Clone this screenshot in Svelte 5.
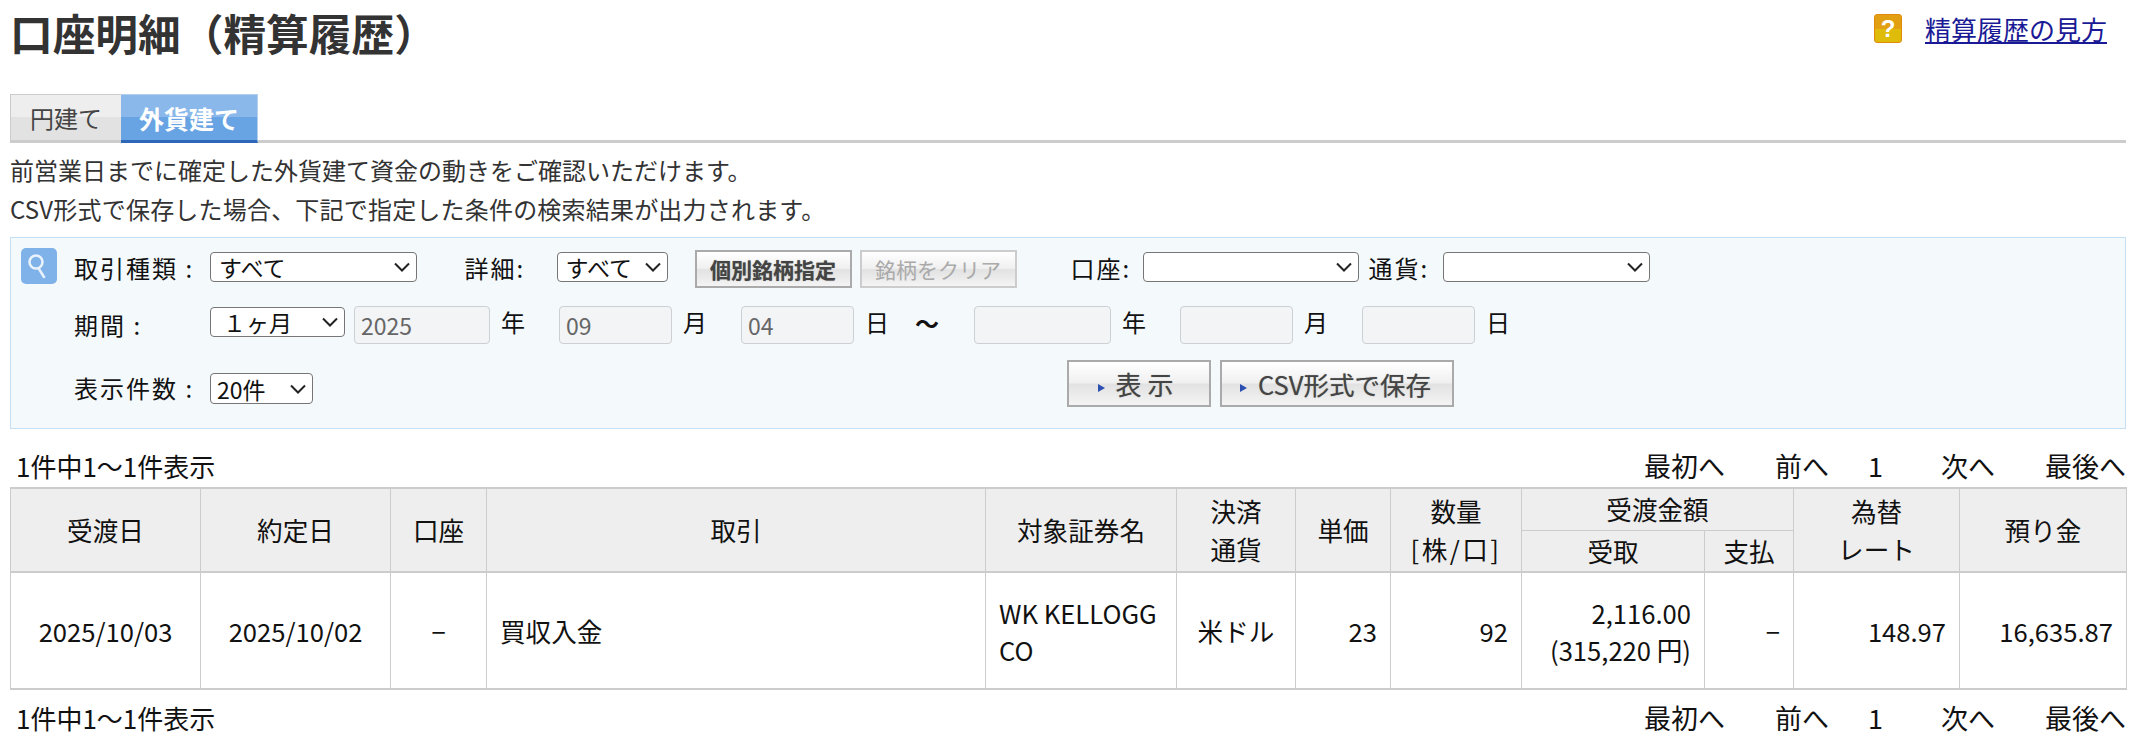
<script>
	const pagerLinks = ['最初へ', '前へ', '1', '次へ', '最後へ'];
</script>

{#snippet pager()}
	<div class="pager">
		<span>1件中1～1件表示</span>
		<div class="pager-links">
			{#each pagerLinks as link, i}
				<span class="p{i}">{link}</span>
			{/each}
		</div>
	</div>
{/snippet}

<div class="page">
	<header class="top">
		<h1>口座明細（精算履歴）</h1>
		<div class="help">
			<span class="help-icon">?</span>
			<a href="#help">精算履歴の見方</a>
		</div>
	</header>

	<div class="tabs">
		<div class="tab">円建て</div>
		<div class="tab active">外貨建て</div>
	</div>

	<p class="lead">前営業日までに確定した外貨建て資金の動きをご確認いただけます。</p>
	<p class="lead second">CSV形式で保存した場合、下記で指定した条件の検索結果が出力されます。</p>

	<section class="panel">
		<div class="search-icon">
			<svg viewBox="0 0 36 36" width="36" height="36">
				<circle cx="15" cy="14" r="6.5" fill="none" stroke="#eaf3fc" stroke-width="2.5" />
				<path d="M18 21l5 8" fill="none" stroke="#eaf3fc" stroke-width="2.5" stroke-linecap="round" />
			</svg>
		</div>
		<div class="form">
			<div class="row r1">
				<span class="label wide">取引種類 :</span>
				<select class="s-kind"><option>すべて</option></select>
				<span class="label detail">詳細:</span>
				<select class="s-detail"><option>すべて</option></select>
				<button class="btn small" type="button">個別銘柄指定</button>
				<button class="btn small off" type="button" disabled>銘柄をクリア</button>
				<span class="label account">口座:</span>
				<select class="s-account"><option></option></select>
				<span class="label currency">通貨:</span>
				<select class="s-currency"><option></option></select>
			</div>
			<div class="row r2">
				<span class="label wide">期間 :</span>
				<select class="s-period"><option>１ヶ月</option></select>
				<input class="i-year first" disabled value="2025" />
				<span class="unit">年</span>
				<input class="i-md" disabled value="09" />
				<span class="unit">月</span>
				<input class="i-md" disabled value="04" />
				<span class="unit">日</span>
				<span class="tilde">～</span>
				<input class="i-year" disabled />
				<span class="unit">年</span>
				<input class="i-md" disabled />
				<span class="unit">月</span>
				<input class="i-md" disabled />
				<span class="unit">日</span>
			</div>
			<div class="row r3">
				<span class="label wide">表示件数 :</span>
				<select class="s-count"><option>20件</option></select>
				<button class="btn big show" type="button"><i></i>表 示</button>
				<button class="btn big csv" type="button"><i></i>CSV形式で保存</button>
			</div>
		</div>
	</section>

	{@render pager()}

	<table>
		<colgroup>
			<col style="width:190px" /><col style="width:190px" /><col style="width:96px" /><col style="width:499px" />
			<col style="width:191px" /><col style="width:119px" /><col style="width:95px" /><col style="width:131px" />
			<col style="width:183px" /><col style="width:89px" /><col style="width:166px" /><col style="width:167px" />
		</colgroup>
		<thead>
			<tr class="h1">
				<th rowspan="2">受渡日</th>
				<th rowspan="2">約定日</th>
				<th rowspan="2">口座</th>
				<th rowspan="2">取引</th>
				<th rowspan="2">対象証券名</th>
				<th rowspan="2">決済<br />通貨</th>
				<th rowspan="2">単価</th>
				<th rowspan="2">数量<br /><span class="unit-head">[株/口]</span></th>
				<th colspan="2">受渡金額</th>
				<th rowspan="2">為替<br />レート</th>
				<th rowspan="2">預り金</th>
			</tr>
			<tr class="h2">
				<th>受取</th>
				<th>支払</th>
			</tr>
		</thead>
		<tbody>
			<tr>
				<td class="c">2025/10/03</td>
				<td class="c">2025/10/02</td>
				<td class="c">−</td>
				<td>買収入金</td>
				<td>WK KELLOGG CO</td>
				<td class="c">米ドル</td>
				<td class="r">23</td>
				<td class="r">92</td>
				<td class="r">2,116.00<br />(315,220 円)</td>
				<td class="r">−</td>
				<td class="r">148.97</td>
				<td class="r">16,635.87</td>
			</tr>
		</tbody>
	</table>

	{@render pager()}
</div>

<style>
	:global(body) {
		margin: 0;
		background: #fff;
	}

	.page {
		width: 2116px;
		margin-left: 10px;
		color: #222;
		font-family: 'Noto Sans CJK JP', 'Noto Sans', sans-serif;
		font-size: 26px;
	}

	.top {
		display: flex;
		justify-content: space-between;
		height: 94px;
	}

	h1 {
		margin: 7px 0 0;
		font-size: 42.7px;
		line-height: 50px;
		font-weight: 700;
		color: #333;
	}

	.help {
		display: flex;
		align-items: flex-start;
		gap: 23px;
		margin: 14px 19px 0 0;
	}

	.help-icon {
		display: block;
		width: 28px;
		height: 29px;
		box-sizing: border-box;
		border: 1px solid #df8a0c;
		border-radius: 3px;
		background: linear-gradient(#e39f12 50%, #dfbb0a 50%);
		color: #fff;
		font: 700 24px/27px 'Liberation Sans', sans-serif;
		text-align: center;
	}

	.help a {
		font-size: 26px;
		line-height: 30px;
		color: #1a1a96;
	}

	.tabs {
		display: flex;
		height: 46px;
		border-bottom: 3px solid #ccc;
	}

	.tab {
		width: 111px;
		height: 49px;
		box-sizing: border-box;
		border: 1px solid #ccc;
		border-right: 0;
		border-bottom: 3px solid #ccc;
		background: linear-gradient(#eee 50%, #e2e2e2 50%);
		font-size: 24px;
		line-height: 46px;
		text-align: center;
		color: #444;
	}

	.tab.active {
		width: 137px;
		border-top-color: #b4cfee;
		border-bottom-color: #2e67b8;
		border-left: 0;
		border-right: 1px solid #b4cfee;
		background: linear-gradient(#8ab8ea 50%, #68a3e3 50%);
		color: #fff;
		font-size: 25px;
		font-weight: 700;
	}

	.lead {
		margin: 0;
		font-size: 24px;
		line-height: 39px;
		color: #333;
	}

	.lead.second {
		letter-spacing: 0.2px;
	}

	.tabs + .lead {
		margin-top: 7px;
	}

	.panel {
		display: flex;
		height: 192px;
		box-sizing: border-box;
		margin-top: 9px;
		padding: 10px 0 0 10px;
		border: 1px solid #c5dff5;
		background: #f4f9fc;
	}

	.search-icon {
		width: 36px;
		height: 36px;
		box-sizing: border-box;
		border-radius: 5px;
		background: #7fb2e8;
		flex: none;
	}

	.form {
		margin-left: 17px;
		flex: 1;
	}

	.row {
		display: flex;
		align-items: center;
		color: #111;
	}

	.r1 {
		height: 38px;
		margin-top: 2px;
	}

	.r1 .label,
	.r1 select {
		margin-bottom: 4px;
	}

	.r2 {
		height: 38px;
		margin-top: 18px;
	}

	.r2 .label {
		margin-bottom: 2px;
	}

	.r2 select {
		margin-bottom: 6px;
	}

	.r3 {
		height: 47px;
		margin-top: 16px;
	}

	.r3 .label {
		margin-top: 8px;
	}

	.r3 select {
		margin-top: 10px;
		height: 31px;
	}

	.label {
		font-size: 24px;
		letter-spacing: 2px;
		white-space: nowrap;
	}

	.wide {
		width: 136px;
		flex: none;
	}

	.detail {
		margin-left: 47.5px;
		width: 92px;
	}

	.account {
		margin-left: 54px;
		width: 72px;
	}

	.currency {
		margin-left: 10px;
		width: 74px;
	}

	select {
		appearance: none;
		height: 30px;
		box-sizing: border-box;
		padding: 0 24px 0 8px;
		border: 1px solid #767676;
		border-radius: 4px;
		font-family: inherit;
		font-size: 23px;
		line-height: 28px;
		color: #111;
		background: #fff url("data:image/svg+xml,%3Csvg xmlns='http://www.w3.org/2000/svg' width='18' height='10'%3E%3Cpath d='M2 1.5l7 7 7-7' fill='none' stroke='%23222' stroke-width='2'/%3E%3C/svg%3E") no-repeat right 5px center;
		flex: none;
	}

	.s-kind { width: 207px; }
	.s-detail { width: 111px; }
	.s-account { width: 216px; }
	.s-currency { width: 207px; }
	.s-period { width: 135px; padding-left: 12px; }
	.s-count { width: 103px; padding-left: 6px; }

	.btn {
		box-sizing: border-box;
		border: 2px solid #aaa;
		padding: 0;
		background: linear-gradient(#fff, #f0f0f0 48%, #e2e2e2 52%, #f4f4f4);
		color: #444;
		font-family: inherit;
		white-space: nowrap;
		text-shadow: 0 0 1px #888;
	}

	.small {
		width: 157px;
		height: 38px;
		font-size: 21px;
		margin-left: 27px;
		font-weight: 700;
	}

	.small.off {
		margin-left: 8px;
		font-weight: 400;
		border-color: #ccc;
		color: #aaa;
		text-shadow: none;
	}

	.big {
		height: 47px;
		font-size: 24px;
	}

	.big i {
		display: inline-block;
		margin-right: 11px;
		border-left: 7px solid #2a4fb0;
		border-top: 4px solid transparent;
		border-bottom: 4px solid transparent;
		vertical-align: middle;
	}

	.show {
		width: 144px;
		margin-left: 753.5px;
		font-size: 26px;
		padding-right: 6px;
	}

	.csv {
		width: 234px;
		margin-left: 9px;
		font-size: 25.5px;
		padding-right: 2px;
	}

	input {
		height: 38px;
		box-sizing: border-box;
		padding: 0 6px;
		border: 1px solid #ccd0d4;
		border-radius: 4px;
		background: #f3f4f6;
		color: #666;
		font-family: inherit;
		font-size: 23px;
		flex: none;
	}

	.i-year { width: 137px; }
	.i-year.first { width: 136px; margin-left: 9px; }
	.i-md { width: 113px; }

	.unit {
		width: 58px;
		padding-left: 11px;
		flex: none;
		font-size: 24px;
		margin-bottom: 8px;
	}

	.tilde {
		width: 59px;
		margin-left: -8px;
		margin-bottom: 6px;
		font-size: 24px;
		font-weight: 700;
		flex: none;
	}

	.pager {
		display: flex;
		justify-content: space-between;
		height: 58px;
		padding-left: 6px;
		line-height: 38px;
		font-size: 26px;
		color: #111;
		box-sizing: border-box;
		padding-top: 18px;
	}

	table + .pager {
		height: 50px;
		padding-top: 9px;
	}

	.pager-links {
		display: flex;
		font-size: 27px;
	}

	.p1 { margin-left: 50px; }
	.p2 { margin-left: 39px; }
	.p3 { margin-left: 58px; }
	.p4 { margin-left: 50px; }

	table {
		width: 2116px;
		table-layout: fixed;
		border-collapse: collapse;
		font-size: 25.6px;
		color: #111;
	}

	th, td {
		border: 1px solid #ccc;
		padding: 0 13px;
		line-height: 37px;
		box-sizing: border-box;
	}

	th {
		padding: 0;
		background: #eee;
		font-weight: 400;
		line-height: 38px;
	}

	.unit-head {
		letter-spacing: 2.5px;
	}

	thead {
		border-top: 2px solid #ccc;
		border-bottom: 2px solid #ccc;
	}

	.h1 th,
	.h2 th {
		height: 42px;
	}

	tbody tr {
		height: 117px;
		border-bottom: 2px solid #ccc;
	}

	.c {
		text-align: center;
	}

	.r {
		text-align: right;
	}
</style>
